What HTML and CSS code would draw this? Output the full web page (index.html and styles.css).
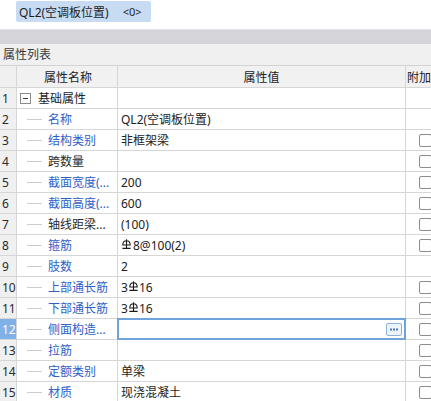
FILE: index.html
```html
<!DOCTYPE html>
<html>
<head>
<meta charset="utf-8">
<link rel="stylesheet" href="styles.css">
</head>
<body>
<div class="top">
  <div class="badge"><span>QL2(空调板位置)</span><span class="cnt">&lt;0&gt;</span></div>
</div>
<div class="band"></div>
<div class="title">属性列表</div>
<div class="grid">
  <div class="row head">
    <div class="c num"></div>
    <div class="c hname">属性名称</div>
    <div class="c hval">属性值</div>
    <div class="c att hatt">附加</div>
  </div>
  <div class="row">
    <div class="c num">1</div>
    <div class="c name"><span class="exp"></span><span class="grp">基础属性</span></div>
    <div class="c val"></div>
    <div class="c att"></div>
  </div>
  <div class="row">
    <div class="c num">2</div>
    <div class="c name"><span class="dash"></span><span class="lbl blue">名称</span></div>
    <div class="c val">QL2(空调板位置)</div>
    <div class="c att"></div>
  </div>
  <div class="row">
    <div class="c num">3</div>
    <div class="c name"><span class="dash"></span><span class="lbl blue">结构类别</span></div>
    <div class="c val">非框架梁</div>
    <div class="c att"><span class="chk"></span></div>
  </div>
  <div class="row">
    <div class="c num">4</div>
    <div class="c name"><span class="dash"></span><span class="lbl">跨数量</span></div>
    <div class="c val"></div>
    <div class="c att"><span class="chk"></span></div>
  </div>
  <div class="row">
    <div class="c num">5</div>
    <div class="c name"><span class="dash"></span><span class="lbl blue">截面宽度(...</span></div>
    <div class="c val">200</div>
    <div class="c att"><span class="chk"></span></div>
  </div>
  <div class="row">
    <div class="c num">6</div>
    <div class="c name"><span class="dash"></span><span class="lbl blue">截面高度(...</span></div>
    <div class="c val">600</div>
    <div class="c att"><span class="chk"></span></div>
  </div>
  <div class="row">
    <div class="c num">7</div>
    <div class="c name"><span class="dash"></span><span class="lbl">轴线距梁...</span></div>
    <div class="c val">(100)</div>
    <div class="c att"><span class="chk"></span></div>
  </div>
  <div class="row">
    <div class="c num">8</div>
    <div class="c name"><span class="dash"></span><span class="lbl blue">箍筋</span></div>
    <div class="c val"><svg class="rb first" width="9" height="10" viewBox="0 0 9 10"><path d="M0.8 6 Q0.8 1.8 4.5 1.8 Q8.2 1.8 8.2 6 Z M4.5 0.3 V9.4 M0.4 9.4 H8.6" fill="none" stroke="#1a1a1a" stroke-width="1.1"/></svg>8@100(2)</div>
    <div class="c att"><span class="chk"></span></div>
  </div>
  <div class="row">
    <div class="c num">9</div>
    <div class="c name"><span class="dash"></span><span class="lbl blue">肢数</span></div>
    <div class="c val">2</div>
    <div class="c att"></div>
  </div>
  <div class="row">
    <div class="c num">10</div>
    <div class="c name"><span class="dash"></span><span class="lbl blue">上部通长筋</span></div>
    <div class="c val">3<svg class="rb" width="9" height="10" viewBox="0 0 9 10"><path d="M0.8 6 Q0.8 1.8 4.5 1.8 Q8.2 1.8 8.2 6 Z M4.5 0.3 V9.4 M0.4 9.4 H8.6" fill="none" stroke="#1a1a1a" stroke-width="1.1"/></svg>16</div>
    <div class="c att"><span class="chk"></span></div>
  </div>
  <div class="row">
    <div class="c num">11</div>
    <div class="c name"><span class="dash"></span><span class="lbl blue">下部通长筋</span></div>
    <div class="c val">3<svg class="rb" width="9" height="10" viewBox="0 0 9 10"><path d="M0.8 6 Q0.8 1.8 4.5 1.8 Q8.2 1.8 8.2 6 Z M4.5 0.3 V9.4 M0.4 9.4 H8.6" fill="none" stroke="#1a1a1a" stroke-width="1.1"/></svg>16</div>
    <div class="c att"><span class="chk"></span></div>
  </div>
  <div class="row">
    <div class="c num active">12</div>
    <div class="c name"><span class="dash"></span><span class="lbl blue">侧面构造...</span></div>
    <div class="c val sel"><span class="more"><svg width="14" height="11" viewBox="0 0 14 11"><rect x="3" y="4.5" width="2" height="2" fill="#4a78b4"/><rect x="6" y="4.5" width="2" height="2" fill="#4a78b4"/><rect x="9" y="4.5" width="2" height="2" fill="#4a78b4"/></svg></span></div>
    <div class="c att"><span class="chk"></span></div>
  </div>
  <div class="row">
    <div class="c num">13</div>
    <div class="c name"><span class="dash"></span><span class="lbl blue">拉筋</span></div>
    <div class="c val"></div>
    <div class="c att"><span class="chk"></span></div>
  </div>
  <div class="row">
    <div class="c num">14</div>
    <div class="c name"><span class="dash"></span><span class="lbl blue">定额类别</span></div>
    <div class="c val">单梁</div>
    <div class="c att"><span class="chk"></span></div>
  </div>
  <div class="row">
    <div class="c num">15</div>
    <div class="c name"><span class="dash"></span><span class="lbl blue">材质</span></div>
    <div class="c val">现浇混凝土</div>
    <div class="c att"><span class="chk"></span></div>
  </div>
</div>
</body>
</html>
```
FILE: styles.css
```css
html, body {
  margin: 0;
  padding: 0;
  background: #ffffff;
}
body {
  font-family: "Noto Sans", "Noto Sans CJK SC", sans-serif;
  font-size: 12px;
  color: #222;
  overflow: hidden;
}
.top {
  height: 29px;
  padding: 1px 0 0 16px;
  box-sizing: border-box;
}
.badge {
  display: inline-flex;
  align-items: center;
  height: 21px;
  padding: 0 9px 0 3px;
  gap: 14px;
  background: #c7dcf2;
  border-radius: 2px;
  color: #1e1e1e;
}
.cnt {
  font-size: 11px;
}
.band {
  height: 15px;
  border-top: 1px solid #e4e4e6;
  background: #d6d6da;
  box-sizing: border-box;
}
.title {
  height: 22px;
  box-sizing: border-box;
  background: #f0f0f0;
  border-bottom: 1px solid #d3d3d3;
  padding: 1px 0 0 3px;
  line-height: 20px;
  color: #3a3a3a;
}
.row {
  display: grid;
  grid-template-columns: 17px 101px 288px 1fr;
  height: 21px;
}
.row.head {
  height: 22px;
  background: #f1f1f1;
}
.c {
  box-sizing: border-box;
  border-right: 1px solid #d6d6d6;
  border-bottom: 1px solid #d6d6d6;
  white-space: nowrap;
  overflow: hidden;
  display: flex;
  align-items: center;
  min-width: 0;
}
.c.att {
  border-right: none;
}
.num {
  background: #f0f0f0;
  padding-left: 2px;
  color: #2a2a2a;
  font-size: 12px;
}
.num.active {
  background: #7fb1e6;
  color: #ffffff;
}
.hname, .hval {
  justify-content: center;
  color: #222;
}
.hname {
  padding-left: 2px;
}
.hatt {
  padding-left: 1px;
  color: #222;
}
.exp {
  width: 11px;
  height: 11px;
  border: 1px solid #8a8a8a;
  box-sizing: border-box;
  margin-left: 3px;
  position: relative;
  flex: none;
  background: #fff;
}
.exp::before {
  content: "";
  position: absolute;
  left: 2px;
  top: 4px;
  width: 5px;
  height: 1px;
  background: #333;
}
.grp {
  margin-left: 7px;
  color: #222;
}
.dash {
  flex: none;
  width: 15px;
  height: 1px;
  margin-left: 10px;
  background: #cdcdcd;
}
.lbl {
  margin-left: 6px;
  color: #2a2a2a;
}
.lbl.blue {
  color: #2f60c8;
}
.val {
  padding-left: 3px;
  color: #222;
}
.rb {
  flex: none;
  margin: 0 1px 2px 1px;
}
.rb.first {
  margin-left: 1px;
  margin-right: 2px;
}
.sel {
  position: relative;
  overflow: visible;
}
.sel::after {
  content: "";
  position: absolute;
  left: -1px;
  top: -1px;
  right: -1px;
  bottom: -1px;
  border: 2px solid #6fa3dc;
  box-sizing: border-box;
  pointer-events: none;
}
.more {
  margin-left: auto;
  margin-right: 3px;
  width: 16px;
  height: 13px;
  box-sizing: border-box;
  border: 1px solid #8cb2e0;
  border-radius: 2px;
  background: #edf4fc;
  display: flex;
  align-items: center;
  justify-content: center;
}
.more svg {
  display: block;
}
.chk {
  flex: none;
  width: 13px;
  height: 13px;
  box-sizing: border-box;
  border: 1px solid #8c8c8c;
  border-radius: 2px;
  margin-left: 13px;
  background: #fff;
}
```
